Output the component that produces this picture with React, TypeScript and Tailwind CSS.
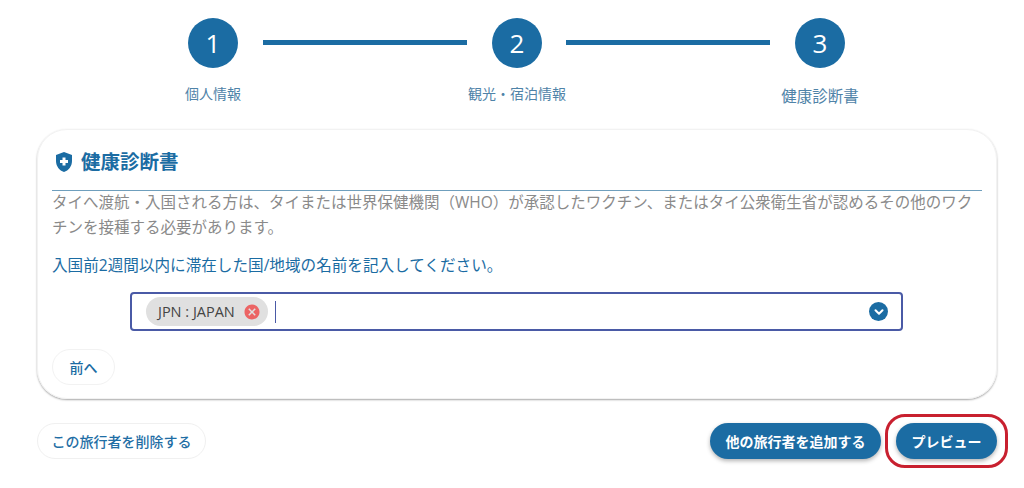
import { ChevronDown } from 'lucide-react';
import { MdCancel, MdHealthAndSafety } from 'react-icons/md';

const font = "font-['Open_Sans','Noto_Sans_CJK_JP',sans-serif]";

function Circle({ n }: { n: number }) {
  return (
    <div className="w-[50px] h-[50px] rounded-full bg-[#1b6ca3] text-white flex items-center justify-center text-[26px] leading-none shrink-0">
      {n}
    </div>
  );
}

function Line({ className }: { className: string }) {
  return <div className={`h-[5px] bg-[#1b6ca3] ${className}`} />;
}

function Label({ children, className }: { children: string; className: string }) {
  return (
    <div className="w-[50px] flex justify-center shrink-0">
      <span className={`whitespace-nowrap text-[#4f83a8] ${className}`}>{children}</span>
    </div>
  );
}

export default function App() {
  return (
    <div className={`${font} relative w-[1024px] h-[488px] bg-white overflow-hidden`}>
      <div className="pt-[18px] pl-[188px]">
        <div className="flex items-center">
          <Circle n={1} />
          <Line className="w-[204px] ml-[25px] mr-[25px] -mt-[1px]" />
          <Circle n={2} />
          <Line className="w-[204px] ml-[24px] mr-[25px] -mt-[1px]" />
          <Circle n={3} />
        </div>
        <div className="flex items-start mt-[16px]">
          <Label className="text-[14px] leading-[20px]">個人情報</Label>
          <div className="w-[254px] shrink-0" />
          <Label className="text-[14px] leading-[20px]">観光・宿泊情報</Label>
          <div className="w-[253px] shrink-0" />
          <Label className="text-[15.5px] leading-[24px]">健康診断書</Label>
        </div>
      </div>

      <div className="mt-[21px] ml-[37px] w-[960px] h-[270px] rounded-[30px] border border-[#f2f2f2] shadow-[0_1px_2px_rgba(0,0,0,0.35)] px-[14px] pt-[18px]">
        <div className="flex items-center gap-[5px] h-[28px]">
          <MdHealthAndSafety className="text-[#1b6ca3] w-[24px] h-[24px]" />
          <h2 className="text-[19.5px] font-bold leading-[28px] text-[#1b6ca3]">健康診断書</h2>
        </div>
        <div className="mt-[14px] border-t border-[#6f9fbd]" />
        <p className="-mt-[1px] text-[15.5px] leading-[25px] text-[#8a8a8a]">
          タイへ渡航・入国される方は、タイまたは世界保健機関（WHO）が承認したワクチン、またはタイ公衆衛生省が認めるその他のワクチンを接種する必要があります。
        </p>
        <p className="mt-[13px] text-[15.6px] leading-[25px] text-[#1b6ca3]">
          入国前2週間以内に滞在した国/地域の名前を記入してください。
        </p>
        <div className="mt-[14px] ml-[78px] w-[773px] h-[39px] rounded-[4px] border-2 border-[#4a5aa6] flex items-center pl-[14px] pr-[13px]">
          <div className="flex items-center h-[29px] w-[122px] rounded-full bg-[#e0e0e0] pl-[12px] gap-[8px]">
            <span className="text-[14.5px] text-[#444] whitespace-nowrap">JPN : JAPAN</span>
            <MdCancel className="text-[#ec6464] w-[18px] h-[18px] shrink-0" />
          </div>
          <div className="ml-[7px] w-[1px] h-[22px] bg-[#4a5aa6]" />
          <div className="ml-auto w-[19px] h-[19px] rounded-full bg-[#1b6ca3] flex items-center justify-center">
            <ChevronDown className="text-white w-[14px] h-[14px]" strokeWidth={3.5} />
          </div>
        </div>
        <button className="mt-[18px] w-[63px] h-[36px] rounded-full border border-[#f2f2f2] text-[14px] font-medium text-[#1b6ca3] flex items-center justify-center">
          前へ
        </button>
      </div>

      <div className="mt-[24px] ml-[37px] w-[960px] flex items-center">
        <button className="w-[169px] h-[36px] rounded-full border border-[#f0f0f0] text-[14px] font-medium text-[#1f6ea5] flex items-center justify-center whitespace-nowrap">
          この旅行者を削除する
        </button>
        <button className="ml-auto w-[171px] h-[36px] rounded-full bg-[#1b6ca3] text-[14px] font-bold text-white shadow-[0_2px_4px_rgba(0,0,0,0.3)] flex items-center justify-center whitespace-nowrap">
          他の旅行者を追加する
        </button>
        <button className="ml-[15px] w-[101px] h-[36px] rounded-full bg-[#1b6ca3] text-[14px] font-bold text-white shadow-[0_2px_4px_rgba(0,0,0,0.3)] flex items-center justify-center whitespace-nowrap">
          プレビュー
        </button>
      </div>

      <div className="absolute left-[885px] top-[414px] w-[123px] h-[54px] rounded-[20px] border-[3px] border-[#c8202f]" />
    </div>
  );
}
